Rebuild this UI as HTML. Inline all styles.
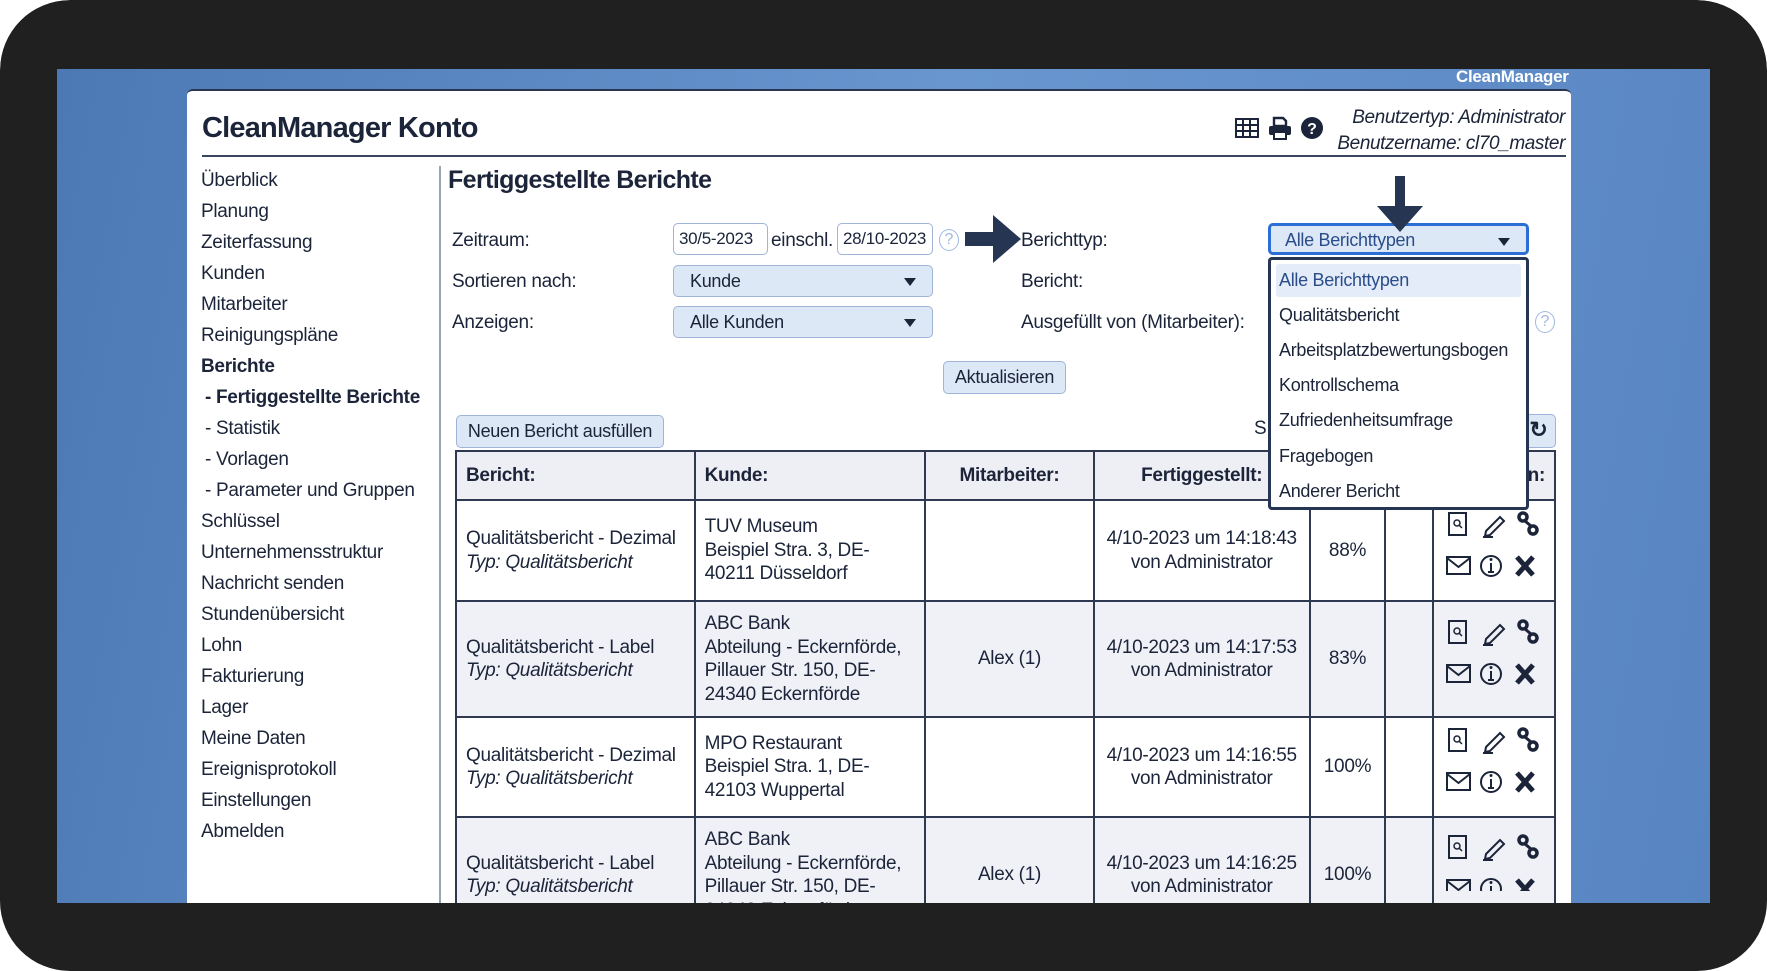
<!DOCTYPE html>
<html><head><meta charset="utf-8"><style>
*{margin:0;padding:0;box-sizing:border-box}
body{width:1767px;height:971px;background:#fff;overflow:hidden;font-family:"Liberation Sans",sans-serif;color:#1b2439;position:relative}
.frame{position:absolute;left:0;top:0;width:1767px;height:971px;background:#212021;border-radius:70px}
.blue{position:absolute;left:57px;top:69px;width:1653px;height:834px;background:linear-gradient(100deg,#4c78b4 0%,#6996cf 50%,#5885c2 100%);overflow:hidden}
.cm{position:absolute;left:1456px;top:67px;color:#fff;font-weight:bold;font-size:17px;letter-spacing:-0.3px}
.panel{position:absolute;left:187px;top:89px;width:1384px;height:820px;background:#fff;border-radius:6px 6px 0 0;border-top:2px solid #2a3650}
.abs{position:absolute;white-space:nowrap}
.title{left:202px;top:112px;font-size:29px;font-weight:bold;letter-spacing:-0.8px}
.hline{left:202px;top:155px;width:1364px;height:2px;background:#3a4560}
.user{right:202px;font-style:italic;font-size:19px;letter-spacing:-0.4px;text-align:right}
.nav{left:201px;font-size:19px;letter-spacing:-0.3px}
.vline{left:439px;top:166px;width:2px;height:740px;background:#9aa3b5}
.lbl{font-size:19px;letter-spacing:-0.3px}
.inp{position:absolute;border:1px solid #9fb4d6;border-radius:5px;background:#fff;font-size:17px;padding:5px 5px;letter-spacing:-0.3px}
.sel{position:absolute;border:1px solid #9fb4d6;border-radius:5px;background:#dde8f6;font-size:18px;padding:5px 16px;letter-spacing:-0.3px}
.sel:after{content:"";position:absolute;right:16px;top:12px;border-left:6px solid transparent;border-right:6px solid transparent;border-top:8px solid #1b2439}
.btn{position:absolute;border:1px solid #9fb4d6;border-radius:5px;background:#dde8f6;font-size:18px;text-align:center;letter-spacing:-0.3px}
.q{position:absolute;width:20px;height:22px;border:1.5px solid #9fb8e0;border-radius:50%;color:#9fb8e0;font-size:16px;text-align:center;line-height:19px}
table{position:absolute;left:455px;top:450px;border-collapse:collapse;width:1101px;font-size:19px;letter-spacing:-0.3px}
td,th{border:2px solid #2f3a52;vertical-align:middle;line-height:23.5px;padding:0 9px}
th{background:#eeeef5;height:49px;text-align:left}
tr.alt td{background:#f0f0f7}
.c{text-align:center}
.dd{position:absolute;left:1268px;top:257px;width:261px;height:253px;background:#fff;border:3px solid #253552;border-radius:4px;font-size:18px;letter-spacing:-0.3px}
.dd div{position:absolute;left:5px;right:5px;height:33px;padding:6px 3px}
</style></head><body>
<div class="frame"></div>
<div class="blue"></div>
<div class="cm">CleanManager</div>
<div class="panel"></div>
<div class="abs title">CleanManager Konto</div>
<div class="abs hline"></div>
<svg class="abs" style="left:1235px;top:118px" width="24" height="20" viewBox="0 0 24 20"><rect x="1" y="1" width="22" height="18" fill="none" stroke="#1b2439" stroke-width="2"/><path d="M1 7h22M1 13h22M8 1v18M15 1v18" stroke="#1b2439" stroke-width="2"/></svg>
<svg class="abs" style="left:1268px;top:116px" width="24" height="24" viewBox="0 0 24 24"><path d="M6 2h9l3 3v5H6z" fill="none" stroke="#1b2439" stroke-width="2.4"/><rect x="1" y="10" width="22" height="9" rx="2" fill="#1b2439"/><rect x="6" y="16" width="12" height="7" fill="#fff" stroke="#1b2439" stroke-width="2"/></svg>
<svg class="abs" style="left:1301px;top:117px" width="22" height="22" viewBox="0 0 22 22"><circle cx="11" cy="11" r="11" fill="#1b2439"/><text x="11" y="17" text-anchor="middle" fill="#fff" font-size="16" font-weight="bold" font-family="Liberation Sans">?</text></svg>
<div class="abs user" style="top:107px">Benutzertyp: Administrator</div>
<div class="abs user" style="top:133px">Benutzername: cl70_master</div>
<div class="abs nav" style="top:170px">Überblick</div>
<div class="abs nav" style="top:201px">Planung</div>
<div class="abs nav" style="top:232px">Zeiterfassung</div>
<div class="abs nav" style="top:263px">Kunden</div>
<div class="abs nav" style="top:294px">Mitarbeiter</div>
<div class="abs nav" style="top:325px">Reinigungspläne</div>
<div class="abs nav" style="top:356px;font-weight:bold">Berichte</div>
<div class="abs nav" style="top:387px;left:205px;font-weight:bold">- Fertiggestellte Berichte</div>
<div class="abs nav" style="top:418px;left:205px">- Statistik</div>
<div class="abs nav" style="top:449px;left:205px">- Vorlagen</div>
<div class="abs nav" style="top:480px;left:205px">- Parameter und Gruppen</div>
<div class="abs nav" style="top:511px">Schlüssel</div>
<div class="abs nav" style="top:542px">Unternehmensstruktur</div>
<div class="abs nav" style="top:573px">Nachricht senden</div>
<div class="abs nav" style="top:604px">Stundenübersicht</div>
<div class="abs nav" style="top:635px">Lohn</div>
<div class="abs nav" style="top:666px">Fakturierung</div>
<div class="abs nav" style="top:697px">Lager</div>
<div class="abs nav" style="top:728px">Meine Daten</div>
<div class="abs nav" style="top:759px">Ereignisprotokoll</div>
<div class="abs nav" style="top:790px">Einstellungen</div>
<div class="abs nav" style="top:821px">Abmelden</div>
<div class="abs vline"></div>
<div class="abs" style="left:448px;top:166px;font-size:25px;font-weight:bold;letter-spacing:-0.6px">Fertiggestellte Berichte</div>
<div class="abs lbl" style="left:452px;top:230px">Zeitraum:</div>
<div class="abs lbl" style="left:452px;top:271px">Sortieren nach:</div>
<div class="abs lbl" style="left:452px;top:312px">Anzeigen:</div>
<div class="inp" style="left:673px;top:223px;width:95px;height:32px">30/5-2023</div>
<div class="abs lbl" style="left:771px;top:230px">einschl.</div>
<div class="inp" style="left:837px;top:223px;width:96px;height:32px">28/10-2023</div>
<div class="q" style="left:939px;top:229px">?</div>
<div class="sel" style="left:673px;top:265px;width:260px;height:32px">Kunde</div>
<div class="sel" style="left:673px;top:306px;width:260px;height:32px">Alle Kunden</div>
<svg class="abs" style="left:965px;top:215px" width="56" height="48" viewBox="0 0 56 48"><path d="M0 17h28V0l28 24-28 24V31H0z" fill="#253552"/></svg>
<div class="abs lbl" style="left:1021px;top:230px">Berichttyp:</div>
<div class="abs lbl" style="left:1021px;top:271px">Bericht:</div>
<div class="abs lbl" style="left:1021px;top:312px">Ausgefüllt von (Mitarbeiter):</div>
<div class="sel" style="left:1268px;top:223px;width:261px;height:32px;border:3px solid #2b6fd6;color:#2a4d8a;padding:4px 14px">Alle Berichttypen</div>
<svg class="abs" style="left:1372px;top:176px" width="56" height="56" viewBox="0 0 56 56"><path d="M23 0h10v30h18L28 56 5 30h18z" fill="#253552"/></svg>
<div class="q" style="left:1535px;top:311px">?</div>
<div class="btn" style="left:943px;top:361px;width:123px;height:33px;line-height:31px">Aktualisieren</div>
<div class="btn" style="left:456px;top:415px;width:208px;height:33px;line-height:31px">Neuen Bericht ausfüllen</div>
<div class="abs lbl" style="left:1254px;top:418px">S</div>
<div class="btn" style="left:1521px;top:414px;width:35px;height:34px;font-weight:bold;font-size:22px;line-height:30px">↻</div>
<table>
<colgroup><col style="width:239px"><col style="width:231px"><col style="width:169px"><col style="width:216px"><col style="width:76px"><col style="width:48px"><col style="width:122px"></colgroup>
<tr><th>Bericht:</th><th>Kunde:</th><th class="c">Mitarbeiter:</th><th class="c">Fertiggestellt:</th><th></th><th></th><th style="text-align:right">n:</th></tr>
<tr style="height:101px"><td>Qualitätsbericht - Dezimal<br><i>Typ: Qualitätsbericht</i></td><td>TUV Museum<br>Beispiel Stra. 3, DE-<br>40211 Düsseldorf</td><td></td><td class="c">4/10-2023 um 14:18:43<br>von Administrator</td><td class="c">88%</td><td></td><td></td></tr>
<tr class="alt" style="height:116px"><td>Qualitätsbericht - Label<br><i>Typ: Qualitätsbericht</i></td><td>ABC Bank<br>Abteilung - Eckernförde,<br>Pillauer Str. 150, DE-<br>24340 Eckernförde</td><td class="c">Alex (1)</td><td class="c">4/10-2023 um 14:17:53<br>von Administrator</td><td class="c">83%</td><td></td><td></td></tr>
<tr style="height:100px"><td>Qualitätsbericht - Dezimal<br><i>Typ: Qualitätsbericht</i></td><td>MPO Restaurant<br>Beispiel Stra. 1, DE-<br>42103 Wuppertal</td><td></td><td class="c">4/10-2023 um 14:16:55<br>von Administrator</td><td class="c">100%</td><td></td><td></td></tr>
<tr class="alt" style="height:116px"><td>Qualitätsbericht - Label<br><i>Typ: Qualitätsbericht</i></td><td>ABC Bank<br>Abteilung - Eckernförde,<br>Pillauer Str. 150, DE-<br>24340 Eckernförde</td><td class="c">Alex (1)</td><td class="c">4/10-2023 um 14:16:25<br>von Administrator</td><td class="c">100%</td><td></td><td></td></tr>
</table>
<svg class="abs" style="left:1446px;top:511px" width="104" height="380" viewBox="0 0 104 380">
<defs><g id="ic">
<rect x="3" y="2" width="17" height="22" fill="none" stroke="#1b2439" stroke-width="2"/><circle cx="11" cy="12" r="3" fill="none" stroke="#1b2439" stroke-width="1.5"/><path d="M13 14l3 3" stroke="#1b2439" stroke-width="1.5"/>
<path d="M40 20l14-14 4 4-14 14-5 1z" fill="none" stroke="#1b2439" stroke-width="2"/><path d="M37 26h10" stroke="#1b2439" stroke-width="2"/>
<circle cx="77" cy="6" r="4" fill="none" stroke="#1b2439" stroke-width="3.5"/><circle cx="87" cy="19" r="4" fill="none" stroke="#1b2439" stroke-width="3.5"/><path d="M79 10l6 5" stroke="#1b2439" stroke-width="3"/>
<rect x="1" y="46" width="23" height="17" fill="none" stroke="#1b2439" stroke-width="2"/><path d="M1 47l11.5 9 11.5-9" fill="none" stroke="#1b2439" stroke-width="2"/>
<circle cx="45" cy="55" r="10" fill="none" stroke="#1b2439" stroke-width="2"/><path d="M45 52v9M42 61h6" stroke="#1b2439" stroke-width="2"/><circle cx="45" cy="48.5" r="1.5" fill="#1b2439"/>
<path d="M71 46l16 18M87 46l-16 18" stroke="#1b2439" stroke-width="5"/>
</g></defs>
<use href="#ic" y="0"/><use href="#ic" y="108"/><use href="#ic" y="216"/><use href="#ic" y="323"/>
</svg>
<div class="dd">
<div style="top:4px;background:#e3ecf8;color:#2a4d8a;border-radius:3px">Alle Berichttypen</div>
<div style="top:39px">Qualitätsbericht</div>
<div style="top:74px">Arbeitsplatzbewertungsbogen</div>
<div style="top:109px">Kontrollschema</div>
<div style="top:144px">Zufriedenheitsumfrage</div>
<div style="top:180px">Fragebogen</div>
<div style="top:215px">Anderer Bericht</div>
</div>
<div class="abs" style="left:0;top:903px;width:1767px;height:68px;background:#212021"></div>
<svg class="abs" style="left:0;top:0" width="1767" height="971"><path d="M0 0h70A70 70 0 0 0 0 70z M1767 0h-70a70 70 0 0 1 70 70z M0 971h70a70 70 0 0 1-70-70z M1767 971h-70a70 70 0 0 0 70-70z" fill="#fff"/></svg>
</body></html>
